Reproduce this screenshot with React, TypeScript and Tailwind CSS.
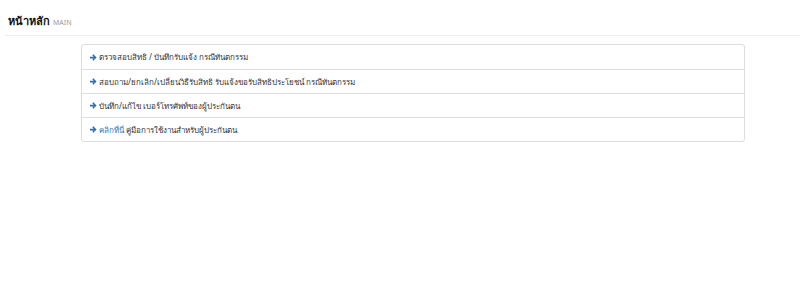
const items: { link?: string; text: string }[] = [
  { text: "ตรวจสอบสิทธิ / บันทึกรับแจ้ง กรณีทันตกรรม" },
  { text: "สอบถาม/ยกเลิก/เปลี่ยนวิธีรับสิทธิ รับแจ้งขอรับสิทธิประโยชน์ กรณีทันตกรรม" },
  { text: "บันทึก/แก้ไข เบอร์โทรศัพท์ของผู้ประกันตน" },
  { link: "คลิกที่นี่", text: " คู่มือการใช้งานสำหรับผู้ประกันตน" },
];

const Arrow = () => (
  <svg viewBox="0 0 8 8" className="w-[7px] h-[7px] mr-[2px] shrink-0 text-[#2e6eab]">
    <path d="M0 3h4.2L2.6 1.4 3.8 0.3 7.5 4 3.8 7.7 2.6 6.6 4.2 5H0z" fill="currentColor" />
  </svg>
);

export default function App() {
  return (
    <div className="w-[800px] h-[298px] bg-white font-['Noto_Sans','Liberation_Sans',sans-serif] text-[#333]">
      <div className="pl-[5px]">
        <div className="flex items-baseline gap-[3px] pl-[3px] pt-[11px] pb-[4px] border-b border-[#eeeeee]">
          <h1 className="text-[11px] font-bold leading-[20px] text-[#111]">หน้าหลัก</h1>
          <span className="text-[7px] text-[#999] uppercase">Main</span>
        </div>
      </div>
      <div className="pt-[8px] pl-[81px] pr-[55px]">
        <ul className="border border-[#dddddd] rounded-[3px]">
          {items.map((item, i) => (
            <li
              key={i}
              className={`flex items-center h-[24px] pl-[8px] pr-[9px] text-[8px] ${
                i > 0 ? "border-t border-[#dddddd]" : ""
              }`}
            >
              <Arrow />
              <span>
                {item.link && <a className="text-[#337ab7]">{item.link}</a>}
                {item.text}
              </span>
            </li>
          ))}
        </ul>
      </div>
    </div>
  );
}
